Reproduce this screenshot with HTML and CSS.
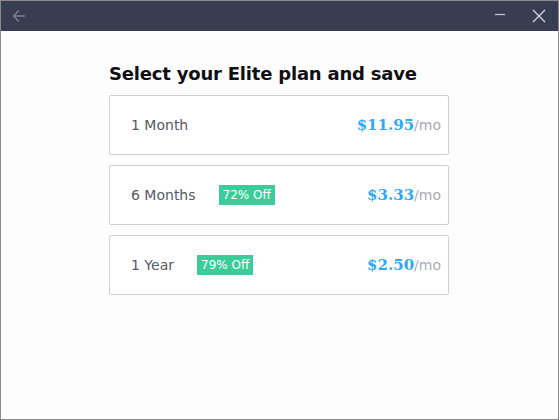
FILE: index.html
```html
<!DOCTYPE html>
<html>
<head>
<meta charset="utf-8">
<link rel="stylesheet" href="styles.css">
</head>
<body>
<div class="window">
  <div class="titlebar">
    <svg class="back" width="14" height="14" viewBox="0 0 14 14"><path d="M7 1.5L1.5 7L7 12.5M1.5 7H13" fill="none" stroke="#7b8093" stroke-width="1.3"/></svg>
    <div class="controls">
      <svg class="min" width="12" height="12" viewBox="0 0 12 12"><path d="M1 6.5H11" stroke="#c9ccd6" stroke-width="1.2"/></svg>
      <svg class="close" width="14" height="14" viewBox="0 0 14 14"><path d="M1 1L13 13M13 1L1 13" stroke="#d5d8e0" stroke-width="1.3"/></svg>
    </div>
  </div>
  <div class="content">
    <h1 class="heading">Select your Elite plan and save</h1>
    <div class="plans">
      <div class="plan">
        <div class="left"><span class="name">1 Month</span></div>
        <div class="price"><span class="amount">$11.95</span><span class="per">/mo</span></div>
      </div>
      <div class="plan">
        <div class="left"><span class="name">6 Months</span><span class="badge">72% Off</span></div>
        <div class="price"><span class="amount">$3.33</span><span class="per">/mo</span></div>
      </div>
      <div class="plan">
        <div class="left"><span class="name">1 Year</span><span class="badge">79% Off</span></div>
        <div class="price"><span class="amount">$2.50</span><span class="per">/mo</span></div>
      </div>
    </div>
  </div>
</div>
</body>
</html>
```
FILE: styles.css
```css
html, body {
  margin: 0;
  padding: 0;
  background: #fff;
}
.window {
  width: 559px;
  height: 420px;
  box-sizing: border-box;
  border: 1px solid #8a8a8a;
  background: #fdfdfd;
  font-family: "DejaVu Sans", Verdana, sans-serif;
}
.titlebar {
  height: 30px;
  background: #383d52;
  display: flex;
  align-items: center;
  justify-content: space-between;
  padding: 0 12px 0 11px;
}
.back {
  display: block;
}
.controls {
  display: flex;
  align-items: center;
  gap: 26px;
}
.min, .close { display: block; }
.min { margin-top: -4px; }
.content {
  padding: 31px 0 0 108px;
}
.heading {
  margin: 0 0 10px;
  font-family: "DejaVu Sans", Verdana, sans-serif;
  font-weight: bold;
  font-size: 18px;
  line-height: 23px;
  color: #0f0f14;
  letter-spacing: -0.2px;
}
.plans {
  width: 340px;
  display: flex;
  flex-direction: column;
  gap: 10px;
}
.plan {
  height: 60px;
  box-sizing: border-box;
  border: 1px solid #cfcfcf;
  border-radius: 2px;
  background: #fff;
  display: flex;
  align-items: center;
  justify-content: space-between;
  padding: 0 7px 0 21px;
}
.left {
  display: flex;
  align-items: center;
}
.name {
  font-family: "DejaVu Sans", Verdana, sans-serif;
  font-size: 14px;
  color: #555a66;
}
.badge {
  margin-left: 23px;
  background: #3ccc9a;
  color: #fff;
  font-size: 12px;
  line-height: 20px;
  padding: 0 4px;
}
.price {
  display: flex;
  align-items: baseline;
}
.amount {
  font-family: "DejaVu Serif", Georgia, serif;
  font-weight: bold;
  font-size: 15px;
  color: #2fa8f5;
}
.per {
  font-family: "DejaVu Sans", Verdana, sans-serif;
  font-size: 14px;
  color: #a8aab0;
}
```
